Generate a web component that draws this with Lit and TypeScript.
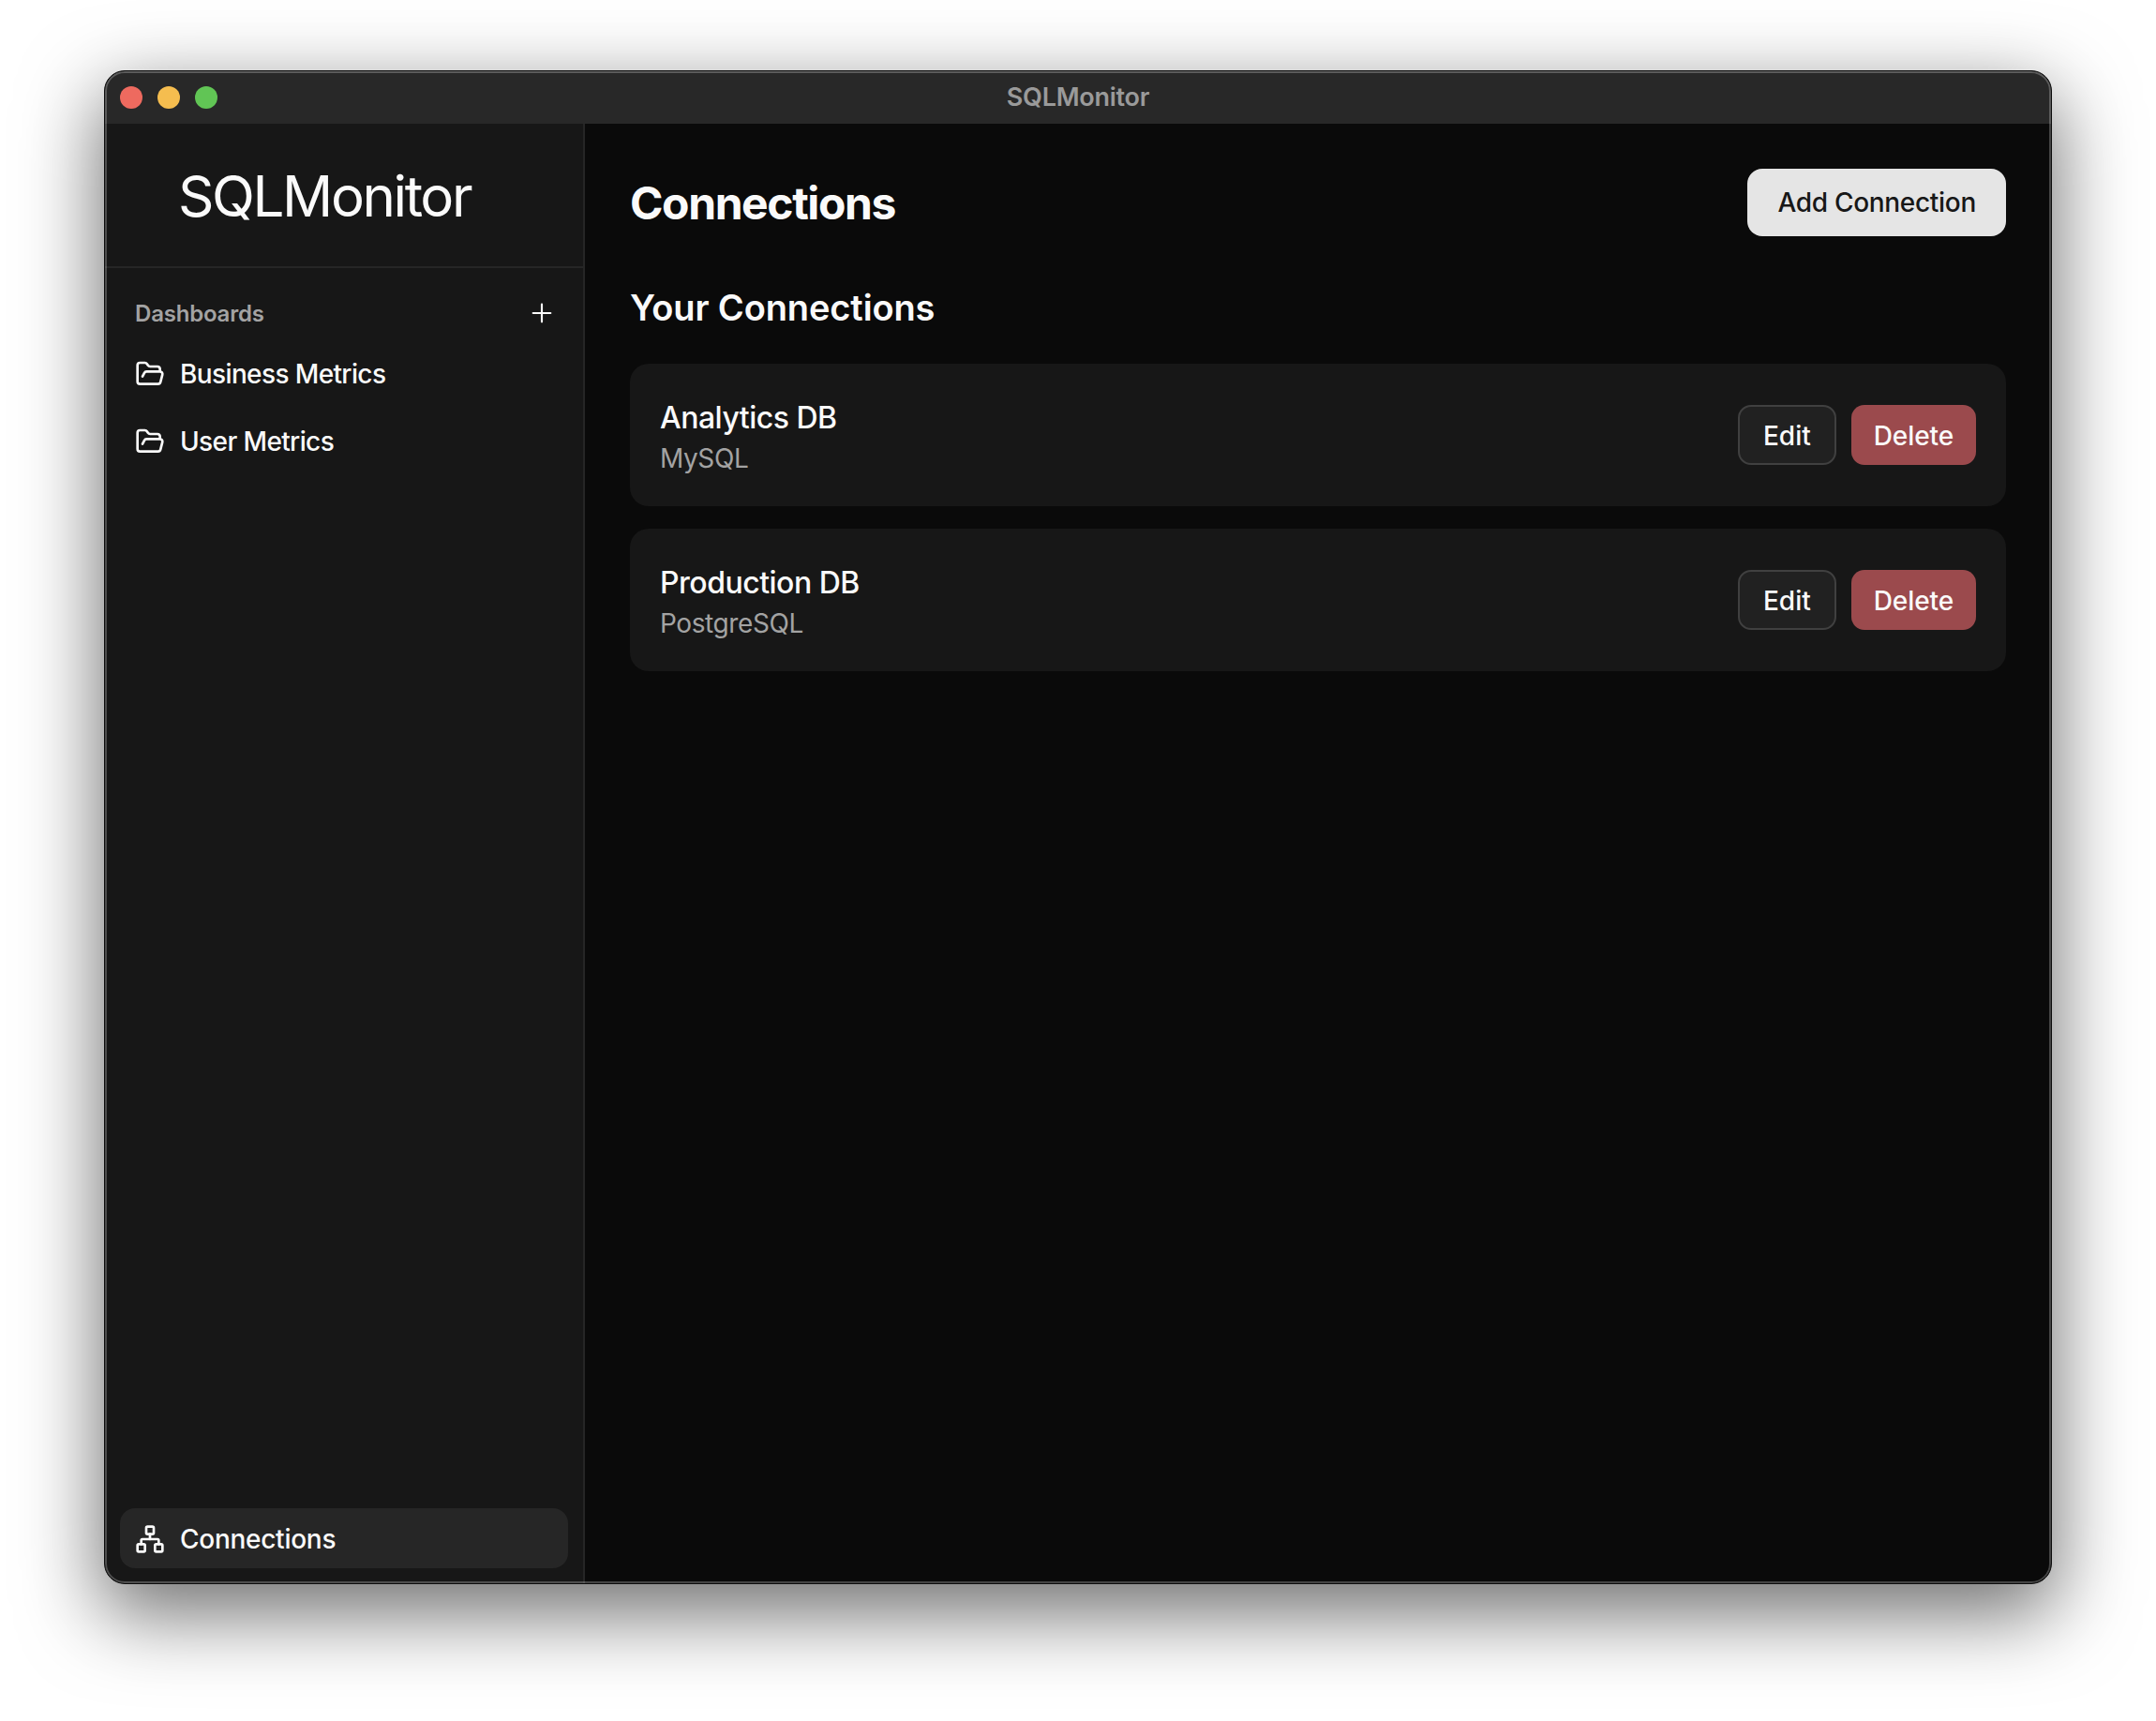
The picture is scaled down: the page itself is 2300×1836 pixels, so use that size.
import { LitElement, html, css, svg } from "lit";
import { customElement } from "lit/decorators.js";

const folderOpen = svg`<path d="m6 14 1.5-2.9A2 2 0 0 1 9.24 10H20a2 2 0 0 1 1.94 2.5l-1.54 6a2 2 0 0 1-1.94 1.5H4a2 2 0 0 1-2-2V5a2 2 0 0 1 2-2h3.9a2 2 0 0 1 1.69.9l.81 1.2a2 2 0 0 0 1.67.9H18a2 2 0 0 1 2 2v2"/>`;
const network = svg`<rect x="16" y="16" width="6" height="6" rx="1"/><rect x="2" y="16" width="6" height="6" rx="1"/><rect x="9" y="2" width="6" height="6" rx="1"/><path d="M5 16v-3a1 1 0 0 1 1-1h12a1 1 0 0 1 1 1v3"/><path d="M12 12V8"/>`;
const plus = svg`<path d="M5 12h14"/><path d="M12 5v14"/>`;

const icon = (body: unknown, cls = "icon") => html`<svg class=${cls} viewBox="0 0 24 24" fill="none" stroke="currentColor" stroke-linecap="round" stroke-linejoin="round">${body}</svg>`;

@customElement("app-root")
export class AppRoot extends LitElement {
  static styles = css`
    :host {
      display: block;
      box-sizing: border-box;
      width: 2300px;
      height: 1836px;
      padding: 75px 0 0 111px;
      background: #fff;
      overflow: hidden;
      font-family: Inter, "Liberation Sans", sans-serif;
      color: #fafafa;
    }
    * { box-sizing: border-box; }
    .window {
      position: relative;
      width: 2078px;
      height: 1615px;
      display: flex;
      flex-direction: column;
      border: 1px solid #0c0c0c;
      border-radius: 22px;
      overflow: hidden;
      background: #0a0a0a;
    }
    .shadow {
      width: 2078px;
      height: 1615px;
      border-radius: 22px;
      box-shadow: 0 28px 84px 4px rgba(0, 0, 0, 0.56);
    }
    .rim {
      position: absolute;
      inset: 0;
      border: 2px solid rgba(255, 255, 255, 0.24);
      border-radius: 21px;
      pointer-events: none;
    }
    .titlebar {
      flex: none;
      position: relative;
      height: 56px;
      padding-bottom: 2px;
      display: flex;
      align-items: center;
      justify-content: center;
      background: #282828;
      font-size: 27px;
      font-weight: 600;
      letter-spacing: -0.25px;
      color: #9a9a9a;
    }
    .lights {
      position: absolute;
      left: 16px;
      top: 16px;
      display: flex;
      gap: 16px;
    }
    .light { width: 24px; height: 24px; border-radius: 50%; }
    .red { background: #ee6a5f; }
    .yellow { background: #f5bd4f; }
    .green { background: #61c555; }
    .body { flex: 1; display: flex; min-height: 0; }
    .sidebar {
      flex: none;
      width: 512px;
      display: flex;
      flex-direction: column;
      background: #171717;
      border-right: 2px solid #262626;
    }
    .logo {
      height: 154px;
      flex: none;
      display: flex;
      align-items: center;
      padding: 2px 0 0 78px;
      border-bottom: 2px solid #262626;
      font-size: 60px;
      font-weight: 400;
      letter-spacing: -2.4px;
      color: #fafafa;
    }
    .nav { flex: 1; padding: 32px 16px 0; display: flex; flex-direction: column; gap: 8px; }
    .group {
      display: flex;
      align-items: center;
      justify-content: space-between;
      height: 32px;
      margin-bottom: 8px;
      padding: 0 12px 0 16px;
      font-size: 24px;
      font-weight: 600;
      letter-spacing: -0.2px;
      color: #a3a3a3;
    }
    .group .plus { width: 32px; height: 32px; stroke-width: 1.6; color: #fafafa; }
    .item {
      display: flex;
      align-items: center;
      gap: 16px;
      height: 64px;
      padding: 1px 16px 0;
      border-radius: 16px;
      font-size: 28px;
      font-weight: 450;
      letter-spacing: -0.62px;
      color: #fafafa;
    }
    .item.active { background: #262626; font-weight: 500; letter-spacing: -0.27px; }
    .icon { width: 32px; height: 32px; flex: none; stroke-width: 2; }
    .foot { padding: 0 16px 16px; }
    .main { flex: 1; padding: 48px; min-width: 0; background: #0a0a0a; }
    .head {
      display: flex;
      align-items: center;
      justify-content: space-between;
      height: 72px;
      margin-bottom: 48px;
    }
    h1 { margin: 0; font-size: 48px; font-weight: 700; letter-spacing: -1.4px; color: #fafafa; }
    h2 { margin: 0 0 32px; height: 56px; line-height: 56px; font-size: 38px; font-weight: 600; letter-spacing: -0.12px; color: #fafafa; }
    .cards { display: flex; flex-direction: column; gap: 24px; }
    .card {
      display: flex;
      align-items: center;
      justify-content: space-between;
      height: 152px;
      padding: 32px;
      border-radius: 20px;
      background: #171717;
    }
    .name { padding-top: 3px; font-size: 32px; line-height: 47px; font-weight: 500; letter-spacing: -0.5px; color: #fafafa; }
    .type { font-size: 28px; line-height: 40px; font-weight: 400; letter-spacing: -0.4px; color: #a3a3a3; }
    .actions { display: flex; gap: 16px; }
    .btn {
      display: flex;
      align-items: center;
      justify-content: center;
      height: 64px;
      padding: 1px 24px 0;
      border-radius: 14px;
      font-size: 28px;
      font-weight: 500;
      font-family: inherit;
    }
    .edit { padding: 1px 25px 0; border: 2px solid #404040; background: #212121; color: #fafafa; }
    .delete { border: 0; background: #9b4a4d; color: #fafafa; letter-spacing: -0.1px; }
    .add { height: 72px; padding: 0 32px; border: 0; background: #e5e5e5; color: #171717; border-radius: 16px; letter-spacing: -0.3px; }
  `;

  render() {
    const conns = [
      { name: "Analytics DB", type: "MySQL" },
      { name: "Production DB", type: "PostgreSQL" },
    ];
    return html`
      <div class="shadow">
        <div class="window">
          <div class="titlebar">
            <div class="lights">
              <div class="light red"></div>
              <div class="light yellow"></div>
              <div class="light green"></div>
            </div>
            SQLMonitor
          </div>
          <div class="body">
            <aside class="sidebar">
              <div class="logo">SQLMonitor</div>
              <div class="nav">
                <div class="group"><span>Dashboards</span>${icon(plus, "plus")}</div>
                <div class="item">${icon(folderOpen)}<span>Business Metrics</span></div>
                <div class="item">${icon(folderOpen)}<span>User Metrics</span></div>
              </div>
              <div class="foot">
                <div class="item active">${icon(network)}<span>Connections</span></div>
              </div>
            </aside>
            <main class="main">
              <div class="head">
                <h1>Connections</h1>
                <button class="btn add">Add Connection</button>
              </div>
              <h2>Your Connections</h2>
              <div class="cards">
                ${conns.map(
                  (c) => html`<div class="card">
                    <div>
                      <div class="name">${c.name}</div>
                      <div class="type">${c.type}</div>
                    </div>
                    <div class="actions">
                      <button class="btn edit">Edit</button>
                      <button class="btn delete">Delete</button>
                    </div>
                  </div>`
                )}
              </div>
            </main>
          </div>
          <div class="rim"></div>
        </div>
      </div>
    `;
  }
}
